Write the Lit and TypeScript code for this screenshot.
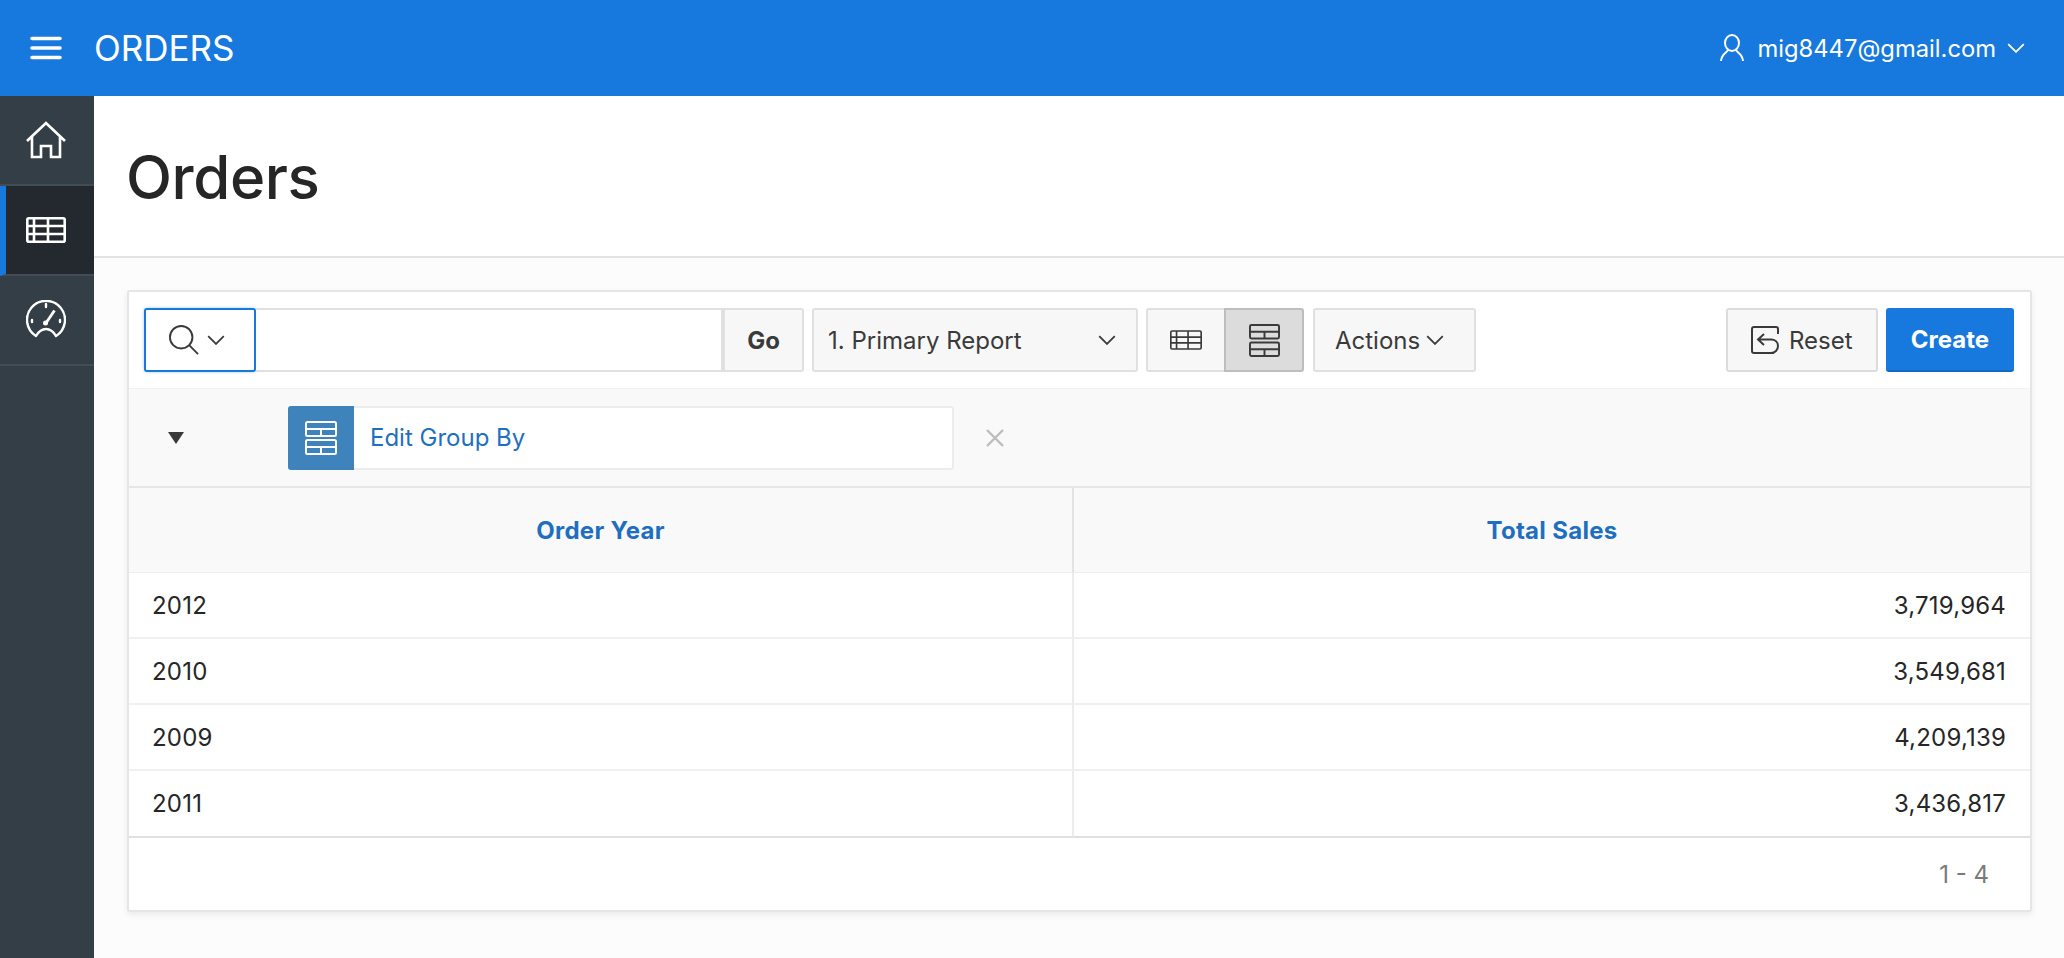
import { LitElement, html, css, svg } from "lit";
import { customElement } from "lit/decorators.js";

const chevron = svg`<path d="M1 1l7 7 7-7" fill="none" stroke="currentColor" stroke-width="1.6"/>`;

const tableIcon = svg`<g fill="none" stroke="currentColor" stroke-width="2"><rect x="1" y="1" width="37" height="22" rx="1.5"/><path d="M1 8.5h37M1 15.5h37M8 1v22M22 1v22"/></g>`;

const groupIcon = svg`<g fill="none" stroke="currentColor" stroke-width="2"><rect x="1" y="1" width="30" height="14" rx="1.5"/><path d="M1 8h30M16 8v7"/><rect x="1" y="19" width="30" height="14" rx="1.5"/><path d="M1 26h30M16 26v7"/></g>`;

const rows = [
  ["2012", "3,719,964"],
  ["2010", "3,549,681"],
  ["2009", "4,209,139"],
  ["2011", "3,436,817"],
];

@customElement("app-root")
export class AppRoot extends LitElement {
  static styles = css`
    :host {
      display: block;
      height: 958px;
      overflow: hidden;
      font-family: Inter, "Liberation Sans", sans-serif;
      font-size: 24px;
      color: #262626;
      background: #fcfcfc;
    }
    svg {
      display: block;
    }
    .header {
      height: 96px;
      background: #1778de;
      color: #fff;
      display: flex;
      align-items: center;
      padding: 0 39px 0 30px;
    }
    .burger {
      width: 32px;
      height: 24px;
      margin-right: 32px;
    }
    .app-name {
      font-size: 35px;
      flex: 1;
    }
    .user {
      display: flex;
      align-items: center;
      font-size: 23.75px;
    }
    .user-icon {
      width: 24px;
      height: 28px;
      margin-right: 13px;
    }
    .user-chev {
      width: 18px;
      height: 10px;
      margin-left: 11px;
    }
    .body {
      display: flex;
      height: 862px;
    }
    .side {
      width: 94px;
      background: #343e47;
      flex: none;
    }
    .nav {
      height: 88px;
      border-bottom: 2px solid #424c55;
      display: flex;
      align-items: center;
      justify-content: center;
      padding-right: 2px;
      color: #fff;
    }
    .nav.on {
      background: #23292f;
      border-left: 6px solid #1778de;
      padding-right: 8px;
    }
    .nav svg {
      width: 40px;
      height: 40px;
    }
    .main {
      flex: 1;
      min-width: 0;
    }
    .title-bar {
      height: 162px;
      box-sizing: border-box;
      background: #fff;
      border-bottom: 2px solid #e3e3e3;
      padding: 2px 0 0 32px;
      display: flex;
      align-items: center;
      margin-bottom: 32px;
    }
    h1 {
      margin: 0;
      font-size: 60px;
      font-weight: 500;
      letter-spacing: -0.4px;
      color: #262626;
    }
    .card {
      margin: 0 32px 0 33px;
      background: #fff;
      border: 2px solid #e6e6e6;
      border-radius: 3px;
      box-shadow: 0 3px 6px rgba(0, 0, 0, 0.07);
    }
    .toolbar {
      display: flex;
      align-items: stretch;
      height: 64px;
      padding: 16px 16px 16px 15px;
    }
    .search {
      display: flex;
      width: 660px;
      margin-right: 8px;
    }
    .search-type {
      width: 112px;
      flex: none;
      box-sizing: border-box;
      border: 2px solid #1778de;
      border-radius: 3px;
      box-shadow: 0 0 3px rgba(23, 120, 222, 0.4);
      background: #fff;
      display: flex;
      align-items: center;
      padding-left: 23px;
      gap: 8px;
      color: #3a3a3a;
    }
    .search-type .glass {
      width: 30px;
      height: 30px;
    }
    .search-type .chev {
      width: 18px;
      height: 10px;
    }
    .search-input {
      flex: 1;
      border: 2px solid #e0e0e0;
      border-left: none;
      background: #fff;
    }
    .btn {
      box-sizing: border-box;
      display: flex;
      align-items: center;
      border: 2px solid #e0e0e0;
      border-radius: 3px;
      background: #f7f7f7;
      color: #3a3a3a;
    }
    .go {
      width: 81px;
      flex: none;
      justify-content: center;
      font-weight: 700;
      border-radius: 0 3px 3px 0;
    }
    .select {
      width: 326px;
      margin-right: 8px;
      padding: 0 20px 0 14px;
      justify-content: space-between;
    }
    .select svg,
    .actions svg {
      width: 18px;
      height: 10px;
    }
    .views {
      display: flex;
      width: 158px;
      margin-right: 9px;
    }
    .view {
      flex: 1;
      justify-content: center;
      border-radius: 3px 0 0 3px;
      border-right: none;
    }
    .view svg {
      width: 32px;
      height: 20px;
    }
    .view.on {
      flex: none;
      width: 80px;
      background: #dcdcdc;
      border: 2px solid #bdbdbd;
      border-radius: 0 3px 3px 0;
    }
    .view.on svg {
      width: 31px;
      height: 33px;
    }
    .actions {
      width: 163px;
      padding-left: 20px;
      gap: 6px;
    }
    .spacer {
      flex: 1;
    }
    .reset {
      width: 152px;
      margin-right: 8px;
      padding-left: 23px;
      gap: 10px;
      border-color: #dcdcdc;
    }
    .reset svg {
      width: 28px;
      height: 28px;
    }
    .create {
      width: 128px;
      box-sizing: border-box;
      display: flex;
      align-items: center;
      justify-content: center;
      background: #1778de;
      border-radius: 3px;
      border-bottom: 2px solid #1469c4;
      color: #fff;
      font-weight: 700;
    }
    .groupby {
      height: 100px;
      box-sizing: border-box;
      background: #f9f9f9;
      border-top: 1px solid #f2f2f2;
      border-bottom: 2px solid #e6e6e6;
      display: flex;
      align-items: center;
    }
    .tri {
      width: 0;
      height: 0;
      border-left: 8px solid transparent;
      border-right: 8px solid transparent;
      border-top: 12px solid #3a3a3a;
      margin-left: 39px;
      margin-right: 104px;
    }
    .pill {
      width: 666px;
      height: 64px;
      box-sizing: border-box;
      display: flex;
      align-items: center;
      background: #fff;
      border: 2px solid #ececec;
      border-left: none;
      border-radius: 3px;
      color: #1f6fc0;
    }
    .pill-icon {
      width: 66px;
      height: 64px;
      margin: -2px 16px -2px 0;
      flex: none;
      background: #3f83bd;
      border-radius: 3px 0 0 3px;
      color: #fff;
      display: flex;
      align-items: center;
      justify-content: center;
    }
    .pill-icon svg {
      width: 32px;
      height: 34px;
    }
    .close {
      width: 20px;
      height: 20px;
      margin-left: 31px;
      color: #bdbdbd;
    }
    .table {
      display: grid;
      grid-template-columns: 945px 1fr;
    }
    .th {
      height: 85px;
      box-sizing: border-box;
      background: #f9f9f9;
      border-bottom: 1px solid #eeeeee;
      display: flex;
      align-items: center;
      justify-content: center;
      color: #1f6fc0;
      font-weight: 700;
      letter-spacing: 0.3px;
    }
    .td {
      height: 66px;
      box-sizing: border-box;
      border-bottom: 2px solid #f0f0f0;
      display: flex;
      align-items: center;
      padding: 0 24px;
      background: #fff;
      letter-spacing: 0.2px;
    }
    .td.l {
      padding-left: 23px;
    }
    .l {
      border-right: 2px solid #ececec;
    }
    .th.l {
      border-right-color: #e3e3e3;
    }
    .r {
      justify-content: flex-end;
    }
    .last {
      height: 67px;
      border-bottom: 2px solid #e0e0e0;
    }
    .foot {
      height: 72px;
      display: flex;
      align-items: center;
      justify-content: flex-end;
      padding-right: 41px;
      color: #7a7a7a;
    }
  `;

  render() {
    return html`
      <div class="header">
        <svg class="burger" viewBox="0 0 32 24"><path d="M2 2.500h28M2 12h28M2 21.500h28" stroke="#fff" stroke-width="3.600" stroke-linecap="round"/></svg>
        <div class="app-name">ORDERS</div>
        <div class="user">
          <svg class="user-icon" viewBox="0 0 24 28" fill="none" stroke="#fff" stroke-width="2"><ellipse cx="12" cy="9" rx="7" ry="8"/><path d="M8 15.500c0 3-6.500 3.500-7 11.500M16 15.500c0 3 6.500 3.500 7 11.500"/></svg>
          mig8447@gmail.com
          <svg class="user-chev" viewBox="0 0 16 9">${chevron}</svg>
        </div>
      </div>
      <div class="body">
        <div class="side">
          <div class="nav">
            <svg viewBox="0 0 40 40" fill="none" stroke="currentColor" stroke-width="2.600"><path d="M1 21L20 3l19 18M6 17v20h9V26h10v11h9V17"/></svg>
          </div>
          <div class="nav on">
            <svg viewBox="0 0 40 26" fill="none" stroke="currentColor" stroke-width="2.600"><rect x="1.300" y="1.300" width="37.400" height="23.400" rx="1.500"/><path d="M1 9h38M1 17h38M8 1v24M22 1v24"/></svg>
          </div>
          <div class="nav">
            <svg viewBox="0 0 40 40" fill="none" stroke="currentColor" stroke-width="2.400"><path d="M10 36A19 19 0 1 1 30 36C27 31 24 29 20 29S13 31 10 36z" stroke-linejoin="round"/><path d="M20 4v3M6 20v2M34 20v2" stroke-linecap="round"/><path d="M20 23l8.500-12.500" stroke-width="2.800"/><circle cx="19.500" cy="23" r="2.500" fill="currentColor" stroke="none"/></svg>
          </div>
        </div>
        <div class="main">
          <div class="title-bar"><h1>Orders</h1></div>
          <div class="card">
            <div class="toolbar">
              <div class="search">
                <div class="search-type">
                  <svg class="glass" viewBox="0 0 32 32" fill="none" stroke="currentColor" stroke-width="2"><circle cx="13" cy="13" r="12"/><path d="M21.500 21.500l9.500 9.500"/></svg>
                  <svg class="chev" viewBox="0 0 16 9">${chevron}</svg>
                </div>
                <div class="search-input"></div>
                <div class="btn go">Go</div>
              </div>
              <div class="btn select">1. Primary Report <svg viewBox="0 0 16 9">${chevron}</svg></div>
              <div class="views">
                <div class="btn view"><svg viewBox="0 0 39 24">${tableIcon}</svg></div>
                <div class="btn view on"><svg viewBox="0 0 32 34">${groupIcon}</svg></div>
              </div>
              <div class="btn actions">Actions <svg viewBox="0 0 16 9">${chevron}</svg></div>
              <div class="spacer"></div>
              <div class="btn reset">
                <svg viewBox="0 0 28 28" fill="none" stroke="currentColor" stroke-width="2"><path d="M27 8V3a2 2 0 0 0-2-2H3a2 2 0 0 0-2 2v22a2 2 0 0 0 2 2h20"/><path d="M13 8l-6 5.500 6 5.500M7 13.500h13c4 0 7 2.500 7 6.500s-3 7-7 7"/></svg>
                Reset
              </div>
              <div class="create">Create</div>
            </div>
            <div class="groupby">
              <div class="tri"></div>
              <div class="pill">
                <div class="pill-icon"><svg viewBox="0 0 32 34">${groupIcon}</svg></div>
                Edit Group By
              </div>
              <svg class="close" viewBox="0 0 20 20"><path d="M2 2l16 16M18 2L2 18" stroke="currentColor" stroke-width="2.400"/></svg>
            </div>
            <div class="table">
              <div class="th l">Order Year</div>
              <div class="th">Total Sales</div>
              ${rows.map(
                (r, i) => html`
                  <div class="td l ${i === rows.length - 1 ? "last" : ""}">${r[0]}</div>
                  <div class="td r ${i === rows.length - 1 ? "last" : ""}">${r[1]}</div>
                `
              )}
            </div>
            <div class="foot">1 - 4</div>
          </div>
        </div>
      </div>
    `;
  }
}
